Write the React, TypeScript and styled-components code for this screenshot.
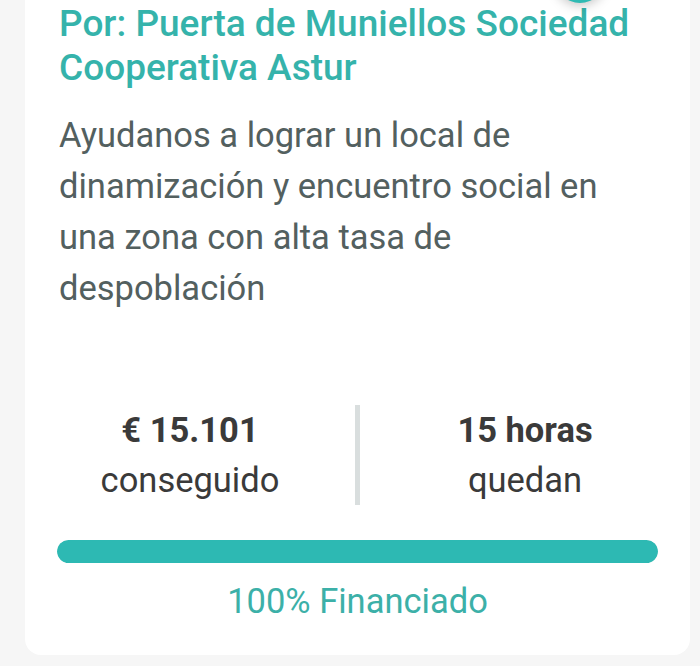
import React from "react";
import styled, { createGlobalStyle } from "styled-components";

const Global = createGlobalStyle`
  html, body { margin: 0; padding: 0; background: #f6f6f6; }
  body { font-family: Roboto, "Noto Sans", sans-serif; overflow: hidden; }
`;

const Page = styled.div`
  width: 700px;
  height: 666px;
  padding: 0 10px 0 25px;
  box-sizing: border-box;
`;

const Card = styled.div`
  position: relative;
  background: #ffffff;
  height: 655px;
  border-radius: 0 0 16px 16px;
  padding: 2px 32px 0 32px;
  box-sizing: border-box;
  display: flex;
  flex-direction: column;
`;

const Badge = styled.div`
  position: absolute;
  left: 530px;
  top: -47px;
  width: 50px;
  height: 50px;
  border-radius: 50%;
  background: #2fbab3;
  box-shadow: 0 2px 12px rgba(0, 0, 0, 0.25);
`;

const Owner = styled.h2`
  margin: 0;
  padding-left: 2px;
  font-size: 37px;
  line-height: 44px;
  font-weight: 500;
  color: #35b3ab;
`;

const Description = styled.p`
  margin: 20px 0 0;
  padding-left: 2px;
  font-size: 34.5px;
  line-height: 51px;
  font-weight: 400;
  color: #53605f;
`;

const Stats = styled.div`
  display: flex;
  align-items: stretch;
  margin: 91px -32px 0;
`;

const Stat = styled.div`
  flex: 1;
  display: flex;
  flex-direction: column;
  align-items: center;
`;

const StatValue = styled.div`
  font-size: 34.5px;
  line-height: 50px;
  font-weight: 700;
  color: #3a3a3a;
`;

const StatLabel = styled.div`
  font-size: 34.5px;
  line-height: 50px;
  font-weight: 400;
  color: #3a3a3a;
`;

const Divider = styled.div`
  width: 5px;
  height: 100px;
  background: #d9dede;
`;

const Bar = styled.div`
  margin-top: 35px;
  height: 23px;
  border-radius: 12px;
  background: #e6eeee;
  overflow: hidden;
`;

const Fill = styled.div`
  height: 100%;
  background: #2db9b3;
  border-radius: 12px;
`;

const Funded = styled.div`
  margin-top: 18px;
  text-align: center;
  font-size: 34.5px;
  line-height: 40px;
  color: #3cb0a8;
`;

export default function App() {
  const percent = 100;
  return (
    <>
      <Global />
      <Page>
        <Card>
          <Badge />
          <Owner>Por: Puerta de Muniellos Sociedad Cooperativa Astur</Owner>
          <Description>
            Ayudanos a lograr un local de dinamización y encuentro social en una zona con alta tasa de despoblación
          </Description>
          <Stats>
            <Stat>
              <StatValue>€ 15.101</StatValue>
              <StatLabel>conseguido</StatLabel>
            </Stat>
            <Divider />
            <Stat>
              <StatValue>15 horas</StatValue>
              <StatLabel>quedan</StatLabel>
            </Stat>
          </Stats>
          <Bar>
            <Fill style={{ width: `${percent}%` }} />
          </Bar>
          <Funded>{percent}% Financiado</Funded>
        </Card>
      </Page>
    </>
  );
}
